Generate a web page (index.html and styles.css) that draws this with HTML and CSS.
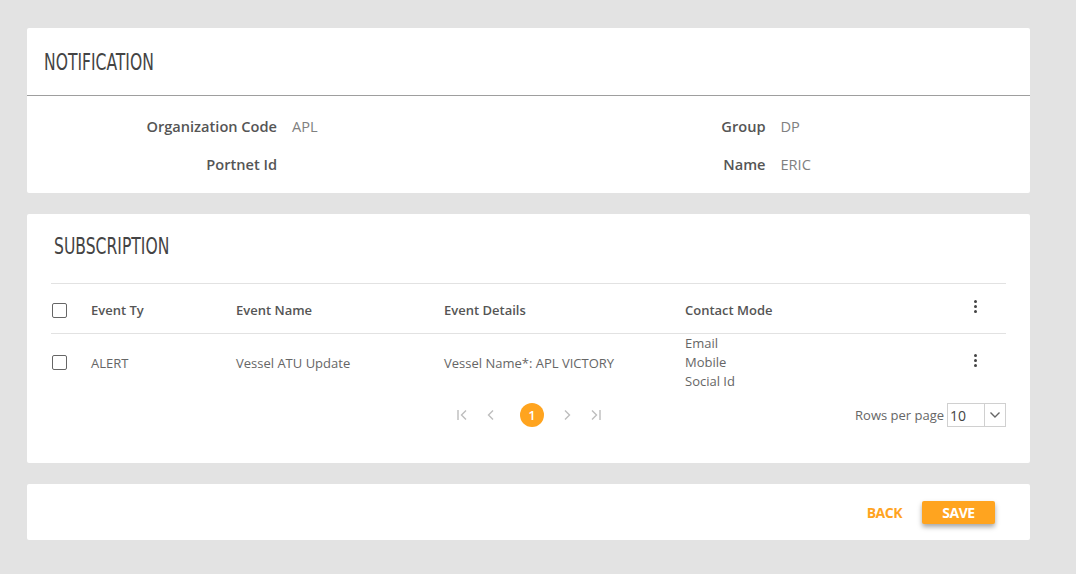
FILE: index.html
```html
<!DOCTYPE html>
<html>
<head>
<meta charset="utf-8">
<link rel="stylesheet" href="styles.css">
</head>
<body>
<div class="page">
  <section class="card notif">
    <header class="card-head"><h1 class="title">NOTIFICATION</h1></header>
    <div class="fields">
      <div class="field"><span class="label">Organization Code</span><span class="value">APL</span></div>
      <div class="field"><span class="label">Group</span><span class="value">DP</span></div>
      <div class="field"><span class="label">Portnet Id</span><span class="value"></span></div>
      <div class="field"><span class="label">Name</span><span class="value">ERIC</span></div>
    </div>
  </section>

  <section class="card subs">
    <h2 class="title sub-title">SUBSCRIPTION</h2>
    <div class="table">
      <div class="row head">
        <span class="cell c-check"><span class="checkbox"></span></span>
        <span class="cell c-type">Event Ty</span>
        <span class="cell c-name">Event Name</span>
        <span class="cell c-details">Event Details</span>
        <span class="cell c-mode">Contact Mode</span>
        <span class="cell c-menu"><span class="kebab"><i></i><i></i><i></i></span></span>
      </div>
      <div class="row body">
        <span class="cell c-check"><span class="checkbox"></span></span>
        <span class="cell c-type">ALERT</span>
        <span class="cell c-name">Vessel ATU Update</span>
        <span class="cell c-details">Vessel Name*: APL VICTORY</span>
        <span class="cell c-mode modes"><span>Email</span><span>Mobile</span><span>Social Id</span></span>
        <span class="cell c-menu"><span class="kebab"><i></i><i></i><i></i></span></span>
      </div>
    </div>
    <div class="pager">
      <div class="pages">
        <svg class="pg" width="14" height="14" viewBox="0 0 14 14"><path d="M3 2v10M11 2.5L6.5 7l4.5 4.5" fill="none" stroke="#bdbdbd" stroke-width="1.4"/></svg>
        <svg class="pg" width="14" height="14" viewBox="0 0 14 14"><path d="M9 2.5L4.5 7 9 11.5" fill="none" stroke="#bdbdbd" stroke-width="1.4"/></svg>
        <span class="page-num">1</span>
        <svg class="pg" width="14" height="14" viewBox="0 0 14 14"><path d="M5 2.5L9.5 7 5 11.5" fill="none" stroke="#bdbdbd" stroke-width="1.4"/></svg>
        <svg class="pg" width="14" height="14" viewBox="0 0 14 14"><path d="M3 2.5L7.5 7 3 11.5M11 2v10" fill="none" stroke="#bdbdbd" stroke-width="1.4"/></svg>
      </div>
      <div class="rpp">
        <span class="rpp-label">Rows per page</span>
        <div class="select"><span class="sel-val">10</span><span class="sel-btn"><svg width="12" height="8" viewBox="0 0 12 8"><path d="M1.5 1.5L6 6l4.5-4.5" fill="none" stroke="#666" stroke-width="1.4"/></svg></span></div>
      </div>
    </div>
  </section>

  <section class="card actions">
    <button class="btn-back">BACK</button>
    <button class="btn-save">SAVE</button>
  </section>
</div>
</body>
</html>
```
FILE: styles.css
```css
html, body { margin: 0; padding: 0; }
body {
  background: #e3e3e3;
  font-family: "Open Sans", "Noto Sans", sans-serif;
  color: #555;
  width: 1076px;
  height: 574px;
  overflow: hidden;
}
.page {
  padding: 28px 46px 0 27px;
  display: flex;
  flex-direction: column;
  gap: 21px;
}
.card {
  background: #fff;
  border-radius: 2px;
}
.title {
  margin: 0;
  font-family: "Liberation Sans Narrow", "DejaVu Sans Condensed", "Roboto Condensed", sans-serif;
  font-weight: 400;
  font-size: 22.5px;
  color: #444;
  letter-spacing: 0;
  transform: scaleX(0.77);
  transform-origin: left center;
  white-space: nowrap;
}
.card-head {
  height: 68px;
  box-sizing: border-box;
  border-bottom: 1px solid #9e9e9e;
  display: flex;
  align-items: center;
  padding-left: 17px;
}
.fields {
  display: grid;
  grid-template-columns: 1fr 1fr;
  row-gap: 0;
  padding: 11px 0 10px;
}
.field {
  display: grid;
  grid-template-columns: 250px auto;
  height: 38px;
  align-items: center;
  font-size: 14.6px;
}
.field:nth-child(2n) { grid-template-columns: 237px auto; }
.label {
  text-align: right;
  font-weight: 600;
  color: #555;
}
.value {
  padding-left: 15px;
  color: #808080;
}
.subs { padding: 18px 24px 30px 24px; }
.sub-title { margin-left: 3px; line-height: 28px; }
.table {
  margin-top: 23px;
  border-top: 1px solid #e2e2e2;
}
.row {
  display: grid;
  grid-template-columns: 40px 145px 208px 241px 1fr 40px;
  align-items: center;
  font-size: 13px;
  box-sizing: border-box;
}
.row.head {
  height: 50px;
  padding-top: 3px;
  border-bottom: 1px solid #e2e2e2;
  color: #555;
  font-weight: 600;
}
.row.body {
  height: 56px;
  color: #666;
}
.cell { display: flex; align-items: center; }
.c-check { padding-left: 1px; }
.checkbox {
  width: 13px; height: 13px;
  border: 1.5px solid #666;
  border-radius: 2px;
}
.modes { flex-direction: column; align-items: flex-start; line-height: 19px; }
.c-menu { justify-content: flex-start; padding-left: 8px; }
.kebab { display: flex; flex-direction: column; gap: 2px; margin-top: -8px; }
.kebab i { display: block; width: 3px; height: 3px; border-radius: 50%; background: #444; }
.row.body .kebab { margin-top: -4px; }
.pager {
  display: flex;
  align-items: center;
  justify-content: flex-end;
  height: 36px;
  margin-top: 7px;
}
.pages {
  display: flex;
  align-items: center;
  gap: 15px;
  margin-right: 252px;
}
.pg { display: block; }
.page-num {
  width: 24px; height: 24px;
  border-radius: 50%;
  background: #ffa41f;
  color: #fff;
  font-size: 13px;
  font-weight: 600;
  display: flex; align-items: center; justify-content: center;
  margin: 0 1px 0 7px;
}
.rpp { display: flex; align-items: center; gap: 3px; }
.rpp-label { font-size: 13px; color: #666; }
.select {
  width: 57px; height: 22px;
  border: 1px solid #d0d0d0;
  display: flex;
  align-items: center;
}
.sel-val { flex: 1; font-size: 14px; color: #444; padding-left: 2px; }
.sel-btn {
  width: 20px; height: 100%;
  border-left: 1px solid #d0d0d0;
  display: flex; align-items: center; justify-content: center;
}
.actions {
  height: 56px;
  display: flex;
  align-items: center;
  justify-content: flex-end;
  padding-right: 35px;
  gap: 20px;
}
button {
  font-family: "Open Sans", sans-serif;
  font-size: 14px;
  font-weight: 700;
  letter-spacing: -0.5px;
  border: none;
  cursor: pointer;
}
.btn-back { background: none; color: #ffa41f; padding: 0; }
.btn-save {
  background: #ffa41f;
  color: #fff;
  width: 73px; height: 23px;
  padding: 0;
  border-radius: 2px;
  box-shadow: 0 3px 5px rgba(0,0,0,0.35);
}
```
